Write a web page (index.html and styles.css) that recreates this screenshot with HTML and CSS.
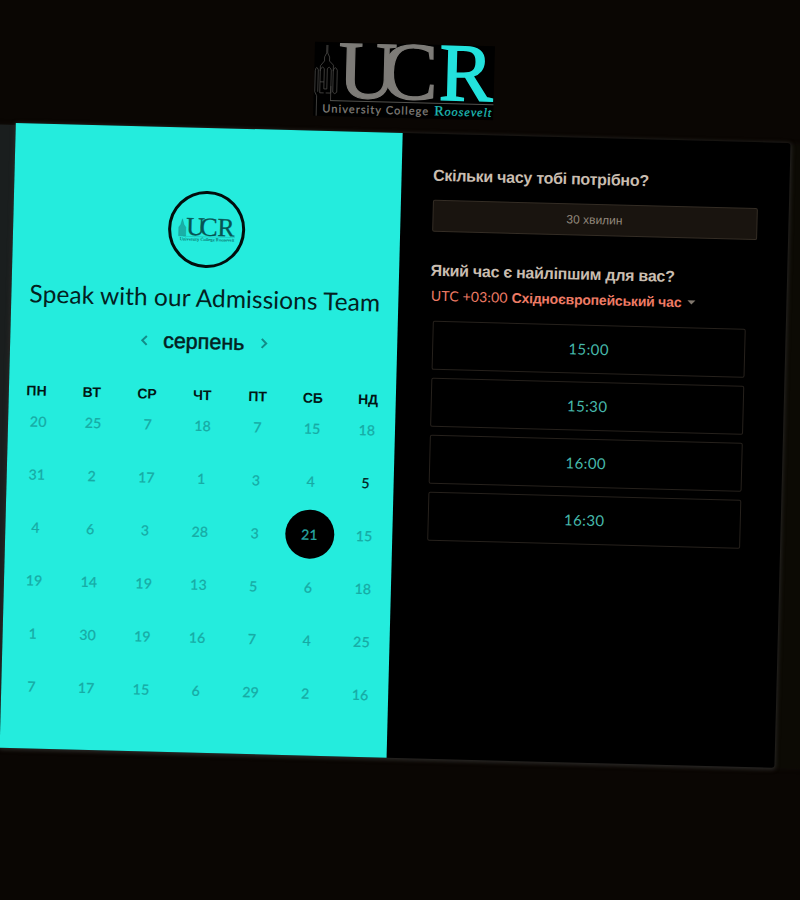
FILE: index.html
```html
<!DOCTYPE html>
<html lang="uk">
<head>
<meta charset="utf-8">
<title>University College Roosevelt</title>
<link rel="stylesheet" href="styles.css">
</head>
<body>
<div class="stage">
  <svg class="logo" viewBox="0 0 180 74">
    <rect width="180" height="74" fill="#000"/>
    <g class="tower"><path d="M12 3V11M13 3V11M12 11L10 15V19L6 24V29M13 11L15 15V19L19 23V29M3 74V54L1 50V29Q2 23 4 28V50M6 51V28Q8 23 10 27V47H13V27Q15 23 17 28V51H12M6 40H10M10 51H6M19 50V28Q21 23 23 28V50Q21 53 19 50M17 44V59"/></g>
    <path d="M17 58.5H180" stroke="#66645f" stroke-width=".8"/>
    <g class="letters" font-size="82"><text x="24" y="55" textLength="59" lengthAdjust="spacingAndGlyphs">U</text><text x="67" y="55" textLength="57" lengthAdjust="spacingAndGlyphs">C</text><text class="accent" x="125" y="55" textLength="54" lengthAdjust="spacingAndGlyphs">R</text></g>
    <text class="sub" x="9" y="70.5" textLength="106">University College</text>
    <text class="roosevelt" x="121" y="70.5" textLength="57"><tspan class="initial">R</tspan>oosevelt</text>
  </svg>
  <main class="card">
    <section class="calendar">
      <div class="avatar">
        <svg class="mini" viewBox="0 0 180 74">
          <path d="M2 58V30L8 22L13 4L18 22L24 30V58Z" fill="#168f8b" opacity=".65"/>
          <g font-size="82"><text x="25" y="55" textLength="59" lengthAdjust="spacingAndGlyphs">U</text><text x="68" y="55" textLength="57" lengthAdjust="spacingAndGlyphs">C</text><text x="124" y="55" textLength="54" lengthAdjust="spacingAndGlyphs">R</text></g>
          <path d="M17 59H180" stroke="#168f8b"/>
          <text class="minisub" x="6" y="72" textLength="172">University College Roosevelt</text>
        </svg>
      </div>
      <h1>Speak with our Admissions Team</h1>
      <div class="month">
        <svg class="arrow" viewBox="0 0 8 12"><path d="M6.5 1.5L2 6L6.5 10.5"/></svg>
        <span>серпень</span>
        <svg class="arrow" viewBox="0 0 8 12"><path d="M1.5 1.5L6 6L1.5 10.5"/></svg>
      </div>
      <div class="week"><span>ПН</span><span>ВТ</span><span>СР</span><span>ЧТ</span><span>ПТ</span><span>СБ</span><span>НД</span></div>
      <div class="days">
        <span>20</span><span>25</span><span>7</span><span>18</span><span>7</span><span>15</span><span>18</span>
        <span>31</span><span>2</span><span>17</span><span>1</span><span>3</span><span>4</span><span class="open">5</span>
        <span>4</span><span>6</span><span>3</span><span>28</span><span>3</span><span class="selected">21</span><span>15</span>
        <span>19</span><span>14</span><span>19</span><span>13</span><span>5</span><span>6</span><span>18</span>
        <span>1</span><span>30</span><span>19</span><span>16</span><span>7</span><span>4</span><span>25</span>
        <span>7</span><span>17</span><span>15</span><span>6</span><span>29</span><span>2</span><span>16</span>
      </div>
    </section>
    <section class="times">
      <h2 class="q1">Скільки часу тобі потрібно?</h2>
      <div class="duration">30 хвилин</div>
      <h2 class="q2">Який час є найліпшим для вас?</h2>
      <div class="zone"><span class="utc">UTC +03:00</span><b>Східноєвропейський час</b><i class="caret"></i></div>
      <div class="slots"><div>15:00</div><div>15:30</div><div>16:00</div><div>16:30</div></div>
    </section>
  </main>
</div>
</body>
</html>
```
FILE: styles.css
```css
* { box-sizing: border-box; }
html, body { margin: 0; height: 900px; overflow: hidden; background: #0a0603; }
body { font-family: "Liberation Sans", sans-serif; }
.stage { width: 775px; margin-left: 18.5px; padding-top: 34px; transform-origin: 0 0; transform: rotate(1.48deg); }
.logo { display: block; width: 180px; height: 74px; margin-left: 296.5px; overflow: visible; }
.tower { fill: none; stroke: #4b4a48; stroke-width: .8; }
.letters { font-family: "Liberation Serif", serif; fill: #7d7b77; stroke: #7d7b77; stroke-width: 1.2; }
.letters .accent { fill: #23e2dd; stroke: #23e2dd; stroke-width: 1.5; }
.sub { font: 11px Lato, sans-serif; fill: #85827e; stroke: #85827e; stroke-width: .2; }
.roosevelt { font: italic 12px "Liberation Serif", serif; fill: #1fbdb8; stroke: #1fbdb8; stroke-width: .3; }
.initial { font-style: normal; font-size: 14px; }
.card { position: relative; display: flex; width: 775px; height: 625px; margin-top: 15.4px; border-radius: 3px; background: #000; box-shadow: 0 1px 4px 1px #2b2927; }
.card::before { content: ""; position: absolute; z-index: -1; top: 2px; bottom: 0; left: -60px; right: -60px; background: linear-gradient(90deg, #1a1e1e 0 50%, #0c0a04 50%); box-shadow: 0 0 5px #120e0a; }
.calendar { width: 387px; height: 625px; padding-top: 63px; background: #24ecdd; display: flex; flex-direction: column; align-items: center; flex: none; }
.avatar { width: 77px; height: 77px; border: 3px solid #020d0c; border-radius: 50%; display: flex; align-items: center; justify-content: center; flex: none; }
.mini { width: 57px; height: 24px; overflow: visible; font-family: "Liberation Serif", serif; fill: #075453; stroke: #075453; stroke-width: 1; }
.minisub { font-size: 14px; stroke-width: .2; }
h1 { margin: 14px 0 0; height: 32px; font: 400 24.5px/32px Lato, sans-serif; letter-spacing: .06px; color: #03211f; white-space: nowrap; }
.month { display: flex; align-items: center; justify-content: space-between; width: 128px; height: 30px; margin-top: 13px; font-size: 21.5px; color: #03211f; -webkit-text-stroke: .5px #03211f; }
.arrow { width: 8px; height: 12px; fill: none; stroke: #138c88; stroke-width: 2; }
.week { display: grid; grid-template-columns: repeat(7, 1fr); width: 387px; height: 20px; margin-top: 28px; font: bold 14px/20px "Liberation Sans", sans-serif; color: #021615; text-align: center; }
.days { display: grid; grid-template-columns: repeat(7, 54.8px); grid-auto-rows: 53px; place-items: center; margin-top: -6px; width: 387px; padding-left: 2.8px; font: 14px Lato, sans-serif; letter-spacing: .2px; color: #17aaa4; -webkit-text-stroke: .25px; }
.open { color: #03211f; }
.selected { display: flex; align-items: center; justify-content: center; width: 49px; height: 49px; margin-top: -1px; border-radius: 50%; background: #000; color: #28a8a5; }
.times { padding-left: 31.5px; color: #c9bdb0; }
h2 { margin: 0; font: bold 16px/20px "Liberation Sans", sans-serif; letter-spacing: -.27px; white-space: nowrap; }
.q1 { margin-top: 31.5px; }
.duration { width: 325px; height: 32px; margin-top: 14px; border: 1px solid #342d25; border-radius: 2px; background: #19140f; font-size: 12px; line-height: 30px; text-align: center; color: #91877b; }
.q2 { margin-top: 29px; }
.zone { display: flex; align-items: center; height: 20px; margin-top: 5px; padding-left: 1px; font-size: 14px; letter-spacing: -.2px; color: #ee7b65; white-space: nowrap; }
.utc { font: 14px Lato, sans-serif; letter-spacing: .15px; margin-right: 4px; }
.caret { margin-left: 6px; border: 4px solid transparent; border-top-color: #81786e; border-bottom: 0; }
.slots { display: grid; gap: 7.9px; width: 313px; margin: 15.5px 0 0 3.5px; }
.slots div { height: 49px; border: 1px solid #26211c; border-radius: 2px; font: 15px/47px Lato, sans-serif; letter-spacing: .4px; text-align: center; color: #46b8ab; }
```
